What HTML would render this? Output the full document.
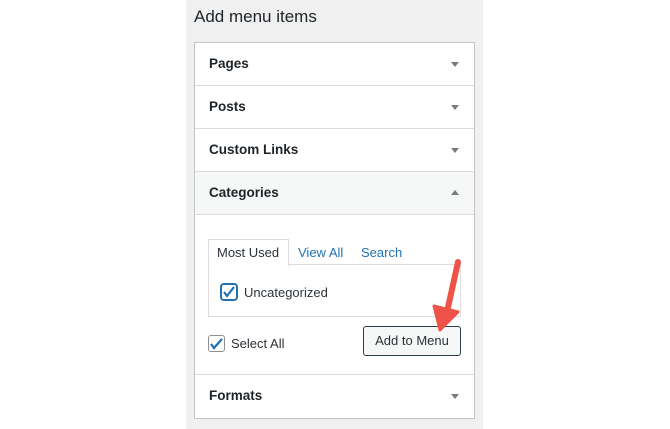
<!DOCTYPE html><html><head><style>
body{margin:0;width:670px;height:429px;background:#fff;font-family:"Liberation Sans",sans-serif;position:relative;overflow:hidden}
.p{position:absolute;left:186px;top:0;width:297px;height:429px;background:#f0f0f1}
h1{position:absolute;left:194px;top:7px;margin:0;font-size:17px;font-weight:normal;color:#1d2327}
.box{position:absolute;left:194px;top:42px;width:279px;height:375px;border:1px solid #c3c4c7;background:#fff}
.r{position:absolute;left:0;width:279px;height:42px;border-bottom:1px solid #dcdcde;font-size:13.5px;font-weight:bold;color:#1d2327;line-height:42px;text-indent:14px}
.r:after{content:"";position:absolute;right:15px;top:19px;border:4.5px solid transparent;border-top:5px solid #787c82;border-bottom:0}
.r.up:after{border-top:0;border-bottom:5px solid #787c82;top:18px}
.t{position:absolute;font-size:13px}
.cb{position:absolute;width:15px;height:15px;border:1px solid #8c8f94;border-radius:3px;background:#fff}
</style></head><body>
<div class="p"></div>
<h1>Add menu items</h1>
<div class="box">
<div class="r" style="top:0">Pages</div>
<div class="r" style="top:43px">Posts</div>
<div class="r" style="top:86px">Custom Links</div>
<div class="r up" style="top:129px;background:#f6f7f7">Categories</div>
<div class="r" style="top:331px;border-bottom:0;border-top:1px solid #dcdcde;height:43px">Formats</div>
</div>
<div style="position:absolute;left:208px;top:264px;width:251px;height:51px;border:1px solid #dcdcde"></div>
<div style="position:absolute;left:208px;top:239px;width:79px;height:26px;border:1px solid #dcdcde;border-bottom:0;background:#fff"></div>
<div class="t" style="left:217px;top:245px;color:#2c3338">Most Used</div>
<div class="t" style="left:298px;top:245px;color:#2271b1">View All</div>
<div class="t" style="left:361px;top:245px;color:#2271b1">Search</div>
<div class="cb" style="left:220px;top:283px;border:2px solid #2271b1;width:14px;height:14px;border-radius:4px"></div>
<svg style="position:absolute;left:222px;top:285px" width="14" height="14"><path d="M2 7l3 4 7-9" stroke="#2271b1" stroke-width="2.2" fill="none"/></svg>
<div class="t" style="left:244px;top:285px;color:#2c3338">Uncategorized</div>
<div class="cb" style="left:208px;top:335px"></div>
<svg style="position:absolute;left:209px;top:336px" width="15" height="15"><path d="M2 8l3 4 8-9" stroke="#2271b1" stroke-width="2.2" fill="none"/></svg>
<div class="t" style="left:231px;top:336px;color:#2c3338">Select All</div>
<div style="position:absolute;left:363px;top:326px;width:96px;height:28px;border:1px solid #2c3e50;border-radius:3px;background:#f6f7f7;font-size:13px;color:#2c3338;text-align:center;line-height:28px">Add to Menu</div>
<svg style="position:absolute;left:420px;top:250px" width="60" height="90"><path d="M38 12 L27 62" stroke="#ef5246" stroke-width="6" stroke-linecap="round"/><path d="M14 56 L20 80 L38 62 Z" fill="#ef5246" stroke="#ef5246" stroke-width="3" stroke-linejoin="round"/></svg>
</body></html>
